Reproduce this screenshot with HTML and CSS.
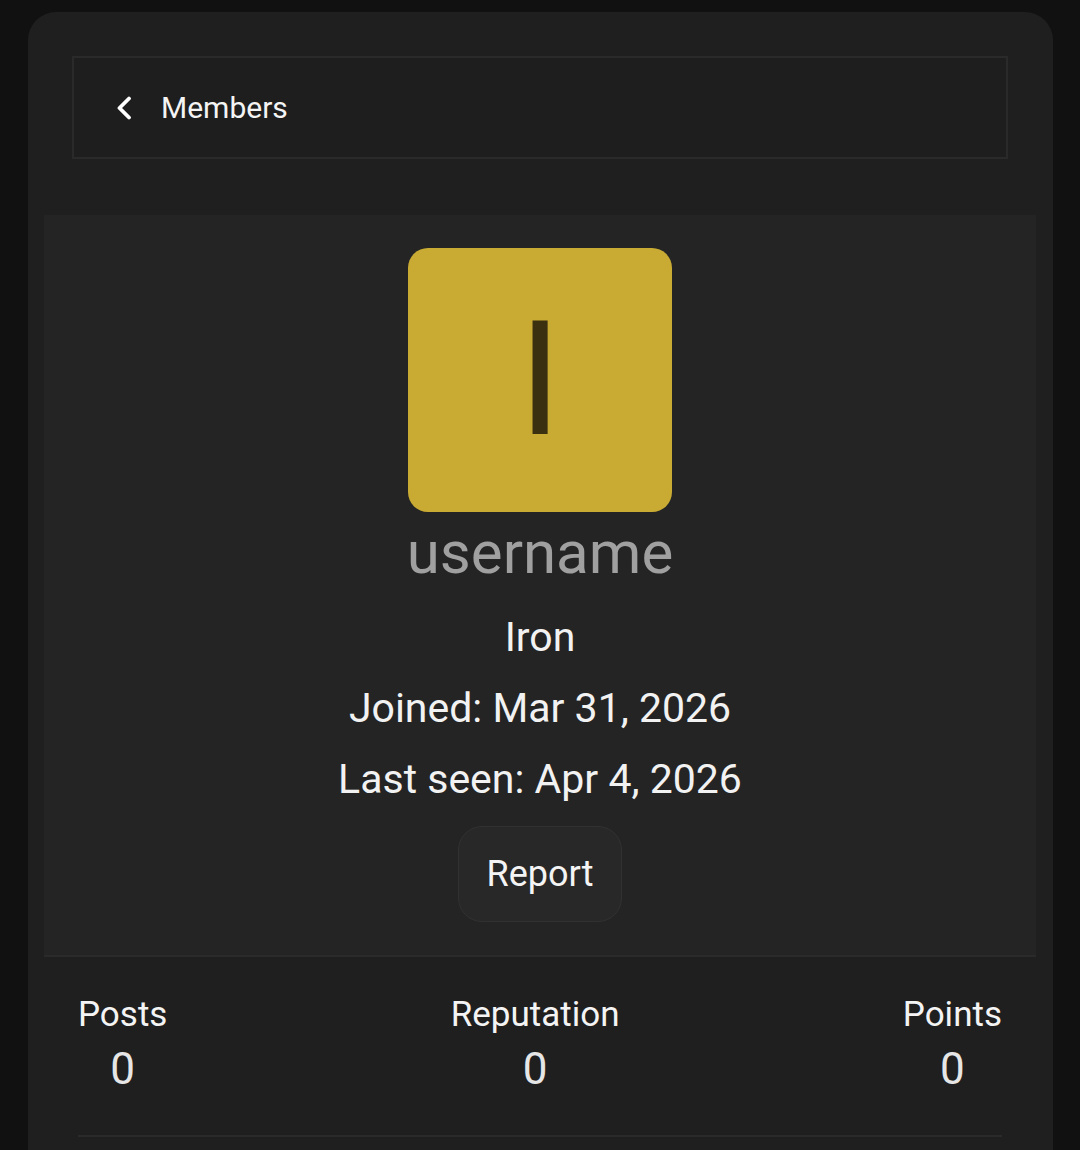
FILE: index.html
```html
<!DOCTYPE html>
<html lang="en">
<head>
<meta charset="utf-8">
<title>Member profile</title>
<link rel="stylesheet" href="styles.css">
</head>
<body>
<div class="card">
  <nav class="crumb">
    <svg class="chev" width="16" height="24" viewBox="0 0 16 24" aria-hidden="true">
      <polyline points="13,2.5 3.5,12 13,21.5" fill="none" stroke="#ffffff" stroke-width="3.8" stroke-linecap="round" stroke-linejoin="round"/>
    </svg>
    <span class="crumb-text">Members</span>
  </nav>
  <section class="profile">
    <div class="avatar">I</div>
    <div class="name">username</div>
    <div class="line rank">Iron</div>
    <div class="line">Joined: Mar 31, 2026</div>
    <div class="line">Last seen: Apr 4, 2026</div>
    <button class="report">Report</button>
  </section>
  <div class="stats">
    <div class="stat"><div class="label">Posts</div><div class="val">0</div></div>
    <div class="stat"><div class="label">Reputation</div><div class="val">0</div></div>
    <div class="stat"><div class="label">Points</div><div class="val">0</div></div>
  </div>
</div>
</body>
</html>
```
FILE: styles.css
```css
html, body {
  margin: 0;
  padding: 0;
  background: #111111;
  height: 1150px;
  overflow: hidden;
}
body {
  font-family: Roboto, "Liberation Sans", Arial, sans-serif;
  color: #f2f2f2;
  padding: 12px 27px 0 28px;
}
.card {
  background: #1f1f1f;
  border-radius: 28px 28px 0 0;
  padding-top: 44px;
  min-height: 1200px;
}
.crumb {
  margin: 0 45px 0 44px;
  height: 99px;
  border: 2px solid #2a2a2a;
  background: #1e1e1e;
  display: flex;
  align-items: center;
  padding-left: 42px;
}
.chev {
  display: block;
  margin-top: 1px;
}
.crumb-text {
  margin-left: 29px;
  font-size: 30px;
  color: #f4f4f4;
}
.profile {
  margin: 56px 17px 0 16px;
  background: #242424;
  border-bottom: 2px solid #2a2a2a;
  padding: 33px 0 33px;
  display: flex;
  flex-direction: column;
  align-items: center;
}
.avatar {
  width: 264px;
  height: 264px;
  border-radius: 20px;
  background: #c9ab33;
  color: #3b3110;
  font-size: 160px;
  line-height: 264px;
  text-align: center;
}
.name {
  font-size: 60px;
  line-height: 82px;
  color: #a0a0a0;
}
.line {
  font-size: 41px;
  line-height: 71px;
  color: #f2f2f2;
}
.rank {
  margin-top: 8px;
}
.report {
  margin-top: 11px;
  width: 164px;
  height: 96px;
  border-radius: 24px;
  background: #282828;
  border: 1px solid #313131;
  color: #f4f4f4;
  font-family: Roboto, "Liberation Sans", Arial, sans-serif;
  font-size: 36px;
  cursor: pointer;
  padding: 0;
}
.stats {
  margin: 0 51px 0 50px;
  padding-top: 34px;
  padding-bottom: 36px;
  display: flex;
  justify-content: space-between;
  border-bottom: 2px solid #2a2a2a;
}
.stat {
  text-align: center;
}
.label {
  font-size: 35px;
  line-height: 48px;
  color: #f4f4f4;
}
.val {
  font-size: 44px;
  line-height: 60px;
  color: #e6e6e6;
}
```
